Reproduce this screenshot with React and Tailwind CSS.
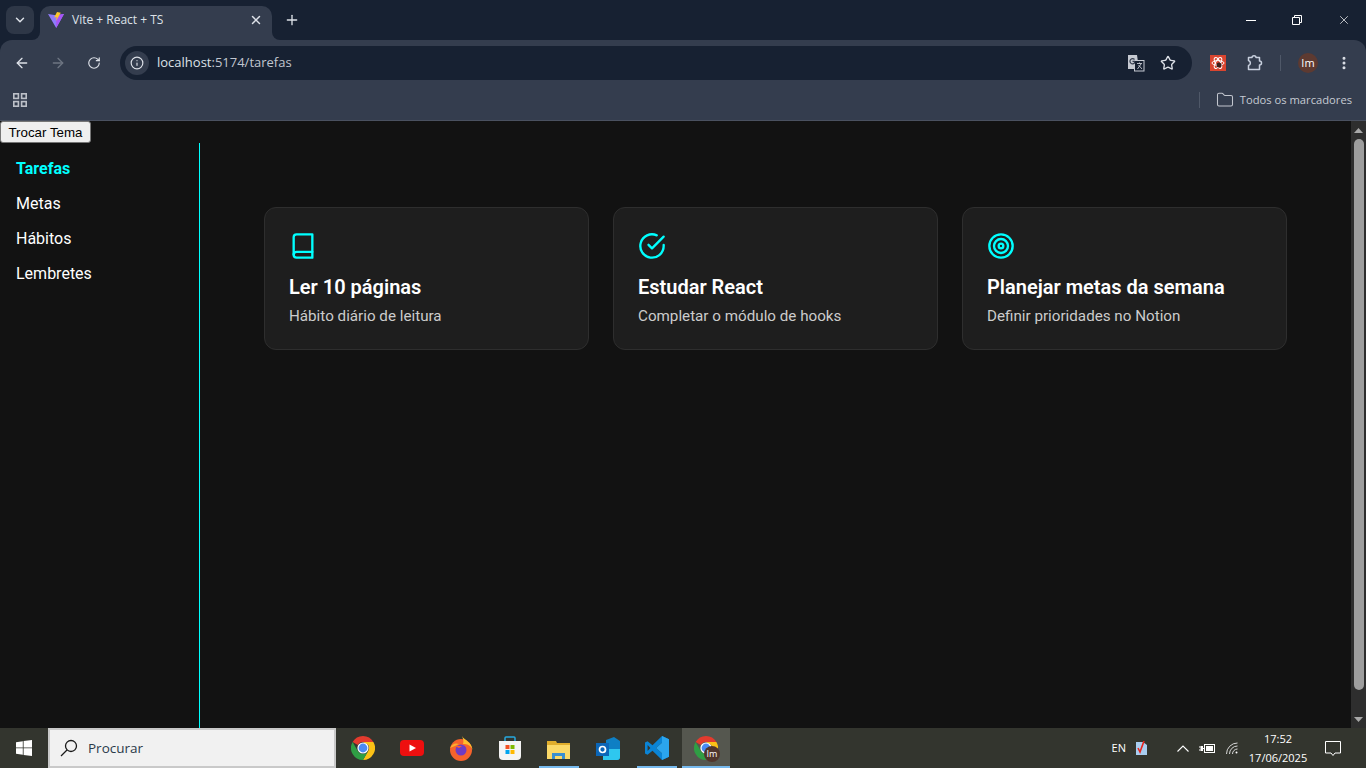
import { ArrowLeft, ArrowRight, ChevronDown, EllipsisVertical, Folder, Info, Plus, RotateCw, Star, X } from 'lucide-react'
import { FiBook, FiCheckCircle, FiTarget } from 'react-icons/fi'

const cards = [
  { icon: FiBook, title: 'Ler 10 páginas', text: 'Hábito diário de leitura' },
  { icon: FiCheckCircle, title: 'Estudar React', text: 'Completar o módulo de hooks' },
  { icon: FiTarget, title: 'Planejar metas da semana', text: 'Definir prioridades no Notion' },
]

function ViteLogo() {
  return (
    <svg width="16" height="16" viewBox="0 0 16 16">
      <path d="M0 2 L8 3.2 L16 2 L8.2 16 Z" fill="#8f7bfb" />
      <path d="M8 3 L16 2 L8.2 16 Z" fill="#a855f7" />
      <path d="M9 0 L12.8 0.8 L8 9 L8.6 5 L6.2 5.4 Z" fill="#fcc72b" />
    </svg>
  )
}

function ChromeLogo({ size = 24 }) {
  return (
    <svg width={size} height={size} viewBox="0 0 24 24">
      <path d="M12 0 A12 12 0 0 1 22.4 6 L12 6 A6 6 0 0 0 6.8 9 L1.6 6 A12 12 0 0 1 12 0 Z" fill="#e33b2e" />
      <path d="M22.4 6 A12 12 0 0 1 12 24 L17.2 15 A6 6 0 0 0 17.2 9 L12 6 Z" fill="#fbc116" />
      <path d="M1.6 6 A12 12 0 0 0 12 24 L17.2 15 A6 6 0 0 1 6.8 15 Z" fill="#2f9e44" />
      <circle cx="12" cy="12" r="5.6" fill="#fff" />
      <circle cx="12" cy="12" r="4.4" fill="#4a8af4" />
    </svg>
  )
}

function TaskbarIcons() {
  return (
    <div className="flex h-full items-center">
      <div className="flex h-full w-[48px] items-center justify-center"><ChromeLogo /></div>
      <div className="flex h-full w-[49px] items-center justify-center">
        <svg width="24" height="16" viewBox="0 0 24 16">
          <rect width="24" height="16" rx="4" fill="#ee0f0f" />
          <path d="M9.5 4.5 L16 8 L9.5 11.5 Z" fill="#fff" />
        </svg>
      </div>
      <div className="flex h-full w-[49px] items-center justify-center">
        <svg width="24" height="25" viewBox="0 0 24 25">
          <circle cx="12" cy="14" r="11" fill="#f7632c" />
          <path d="M13 0 C15 4 23 6 23.5 14 C22 9 18 8 14 8 C15 5 14 3 13 0 Z" fill="#fdbf2d" />
          <path d="M1 12 C3 8 6 6.5 10 8 L6 10 Z" fill="#fbae2c" />
          <circle cx="12" cy="14" r="5.5" fill="#6f3bc4" />
          <path d="M6 10 H13 L10 12 Z" fill="#f7632c" />
        </svg>
      </div>
      <div className="flex h-full w-[49px] items-center justify-center">
        <svg width="24" height="24" viewBox="0 0 24 24">
          <path d="M7 6 V2 Q7 1 8 1 H16 Q17 1 17 2 V6" fill="none" stroke="#27a9e0" strokeWidth="1.5" />
          <path d="M1 5 H23 V20 Q23 24 19 24 H5 Q1 24 1 20 Z" fill="#f4f4f4" />
          <rect x="7.5" y="9" width="4" height="4" fill="#f25022" />
          <rect x="12.5" y="9" width="4" height="4" fill="#7fba00" />
          <rect x="7.5" y="14" width="4" height="4" fill="#00a4ef" />
          <rect x="12.5" y="14" width="4" height="4" fill="#ffb900" />
        </svg>
      </div>
      <div className="flex h-full w-[49px] flex-col items-center justify-end">
        <svg className="mb-[7px]" width="23" height="18" viewBox="0 0 23 18">
          <path d="M0 0 H9 L10 2 H23 V18 H0 Z" fill="#e0ad2c" />
          <path d="M0 4 H23 V18 H0 Z" fill="#fbd968" />
          <path d="M5 18 V12 H18 V18 H15 V15 H8 V18 Z" fill="#3a8fd0" />
        </svg>
        <div className="h-[2px] w-[40px] bg-[#76b9ed]" />
      </div>
      <div className="flex h-full w-[49px] items-center justify-center">
        <svg width="24" height="23" viewBox="0 0 24 23">
          <path d="M10 3 L18 0 L24 4 V20 Q24 23 21 23 H7 V18 H10 Z" fill="#0e7fc4" />
          <path d="M7 12 H24 V20 Q24 23 21 23 H7 Z" fill="#2ec7ef" />
          <rect x="0" y="6" width="13" height="13" fill="#0b66b8" />
          <circle cx="6.5" cy="12.5" r="3" fill="none" stroke="#fff" strokeWidth="1.7" />
        </svg>
      </div>
      <div className="flex h-full w-[50px] flex-col items-center justify-end">
        <svg className="mb-[6px]" width="24" height="24" viewBox="0 0 24 24">
          <path d="M17 0 L24 3.2 V20.8 L17 24 L7.5 14.8 L2.5 18.7 L0 17.4 V6.6 L2.5 5.3 L7.5 9.2 Z M17 6.8 L11 12 L17 17.2 Z M2.6 9 V15 L5.4 12 Z" fill="#0a84d6" />
          <path d="M17 0 L24 3.2 V20.8 L17 24 Z M17 6.8 V17.2 L11 12 Z" fill="#2ba5ee" fillRule="evenodd" />
        </svg>
        <div className="h-[2px] w-[40px] bg-[#76b9ed]" />
      </div>
      <div className="flex h-full w-[48px] flex-col items-center justify-end bg-[#55574f]">
        <div className="relative mb-[6px]">
          <ChromeLogo />
          <div className="absolute left-[10px] top-[10px] flex h-[16px] w-[16px] items-center justify-center rounded-full bg-[#50352c] text-[9px] text-white">Im</div>
        </div>
        <div className="h-[2px] w-full bg-[#76b9ed]" />
      </div>
    </div>
  )
}

export default function App() {
  return (
    <div className="flex h-screen w-full flex-col overflow-hidden bg-[#121212] font-['Roboto',sans-serif]">
      {/* Browser chrome */}
      <div className="h-[121px] shrink-0 bg-[#172132] font-['Open_Sans',sans-serif] text-[#dde1e8]">
        <div className="flex h-[40px] items-end">
          <div className="mb-[6px] ml-[6px] flex h-[28px] w-[28px] items-center justify-center rounded-lg bg-[#2e3747]">
            <ChevronDown size={14} strokeWidth={2.5} />
          </div>
          <div className="relative ml-[6px] flex h-[34px] w-[232px] items-center rounded-t-[10px] bg-[#343d4e] pb-[6px] pl-[8px] pr-[9px]">
            <div className="absolute -left-[8px] bottom-0 h-[8px] w-[8px] bg-[#343d4e]"><div className="h-full w-full rounded-br-[8px] bg-[#172132]" /></div>
            <ViteLogo />
            <span className="ml-[8px] flex-1 text-[12px]">Vite + React + TS</span>
            <X size={14} strokeWidth={2.5} />
            <div className="absolute -right-[8px] bottom-0 h-[8px] w-[8px] bg-[#343d4e]"><div className="h-full w-full rounded-bl-[8px] bg-[#172132]" /></div>
          </div>
          <Plus className="mb-[12px] ml-[12px]" size={16} strokeWidth={2} />
          <div className="mb-[13px] ml-auto flex items-center text-white">
            <div className="flex w-[46px] justify-center"><div className="h-px w-[10px] bg-white" /></div>
            <div className="flex w-[46px] justify-center">
              <svg width="10" height="10" viewBox="0 0 10 10" fill="none" stroke="#fff">
                <path d="M.5 2.5 H7.5 V9.5 H.5 Z M2.5 2.5 V.5 H9.5 V7.5 H7.5" />
              </svg>
            </div>
            <div className="flex w-[46px] justify-center pl-[1px]"><X size={14} strokeWidth={1.2} /></div>
          </div>
        </div>

        <div className="relative h-[81px] rounded-t-[12px] border-b border-[#4a5160] bg-[#343d4e]">
          <div className="flex h-[46px] items-center pl-[14px]">
            <ArrowLeft size={16} strokeWidth={2} />
            <ArrowRight className="ml-[20px] text-[#6d7582]" size={16} strokeWidth={2} />
            <RotateCw className="ml-[21px]" size={14} strokeWidth={2} />
            <div className="ml-[19px] flex h-[34px] w-[1072px] items-center rounded-full bg-[#172132] pl-[5px] pr-[16px]">
              <div className="flex h-[24px] w-[24px] items-center justify-center rounded-full bg-[#343d4e]">
                <Info size={14} strokeWidth={2} />
              </div>
              <span className="ml-[8px] flex-1 text-[13px]">localhost<span className="text-[#c1c6cf]">:5174/tarefas</span></span>
              <svg width="18" height="18" viewBox="0 0 18 18">
                <path d="M1 1 H10 L12 15 H1 Z" fill="#c6cad2" />
                <rect x="7.5" y="6.5" width="9.5" height="10.5" fill="#172132" stroke="#c6cad2" />
                <path d="M10 9.5 H15 M12.5 8.5 V10 M10.5 15 L14 10 M11.5 11 L15 15" fill="none" stroke="#c6cad2" strokeWidth="0.9" />
                <path d="M7.5 5.5 A2.6 2.6 0 1 0 7.5 9 V7.3 H5.5" fill="none" stroke="#343d4e" strokeWidth="1.2" />
              </svg>
              <Star className="ml-[15px]" size={16} strokeWidth={2} />
            </div>
            <div className="ml-[18px] flex h-[16px] w-[16px] items-center justify-center bg-[#d9452f]">
              <svg width="14" height="14" viewBox="0 0 14 14" fill="none" stroke="#fff" strokeWidth="1">
                <ellipse cx="7" cy="7" rx="6" ry="2.4" />
                <ellipse cx="7" cy="7" rx="6" ry="2.4" transform="rotate(60 7 7)" />
                <ellipse cx="7" cy="7" rx="6" ry="2.4" transform="rotate(120 7 7)" />
                <circle cx="8" cy="9" r="2.5" fill="#3a1e1a" stroke="none" />
              </svg>
            </div>
            <svg className="ml-[20px]" width="18" height="18" viewBox="0 0 18 18" fill="none" stroke="#c8d0de" strokeWidth="1.5" strokeLinejoin="round">
              <path d="M2.5 3.5 H6 A2 1.8 0 0 1 10 3.5 H13.5 V7 A1.9 1.9 0 0 1 13.5 11 V15.5 H2.5 V11.5 A2.6 2.6 0 0 0 2.5 6.5 Z" />
            </svg>
            <div className="ml-[16px] h-[16px] w-px bg-[#4f5868]" />
            <div className="ml-[17px] flex h-[20px] w-[20px] items-center justify-center rounded-full bg-[#5d3a31] text-[11px] text-white">Im</div>
            <EllipsisVertical className="ml-[18px]" size={16} strokeWidth={2.5} />
          </div>
          <div className="flex h-[28px] items-center pl-[13px] pr-[14px]">
            <svg width="14" height="14" viewBox="0 0 14 14" fill="none" stroke="#bcc0c8" strokeWidth="1.6">
              <rect x="0.8" y="0.8" width="4.6" height="4.6" />
              <rect x="8.6" y="0.8" width="4.6" height="4.6" />
              <rect x="0.8" y="8.6" width="4.6" height="4.6" />
              <rect x="8.6" y="8.6" width="4.6" height="4.6" />
            </svg>
            <div className="ml-auto h-[16px] w-px bg-[#4f5868]" />
            <Folder className="ml-[16px] text-[#c2c6ce]" size={18} strokeWidth={1.4} />
            <span className="ml-[6px] text-[11.2px] text-[#c6cbd3]">Todos os marcadores</span>
          </div>
        </div>
      </div>

      {/* Page */}
      <div className="flex min-h-0 flex-1">
        <div className="flex min-w-0 flex-1 flex-col">
          <button className="h-[22px] w-[91px] shrink-0 rounded-[3px] border border-[#767676] bg-[#efefef] pt-[1px] font-['Liberation_Sans',sans-serif] text-[13.33px] text-black">
            Trocar Tema
          </button>
          <div className="flex min-h-0 flex-1">
            <nav className="flex w-[200px] shrink-0 flex-col gap-[11px] border-r border-[#00ffff] pl-[16px] pt-[14px] text-[16px] leading-[24px] text-white">
              <a className="font-bold text-[#00ffff]">Tarefas</a>
              <a>Metas</a>
              <a>Hábitos</a>
              <a>Lembretes</a>
            </nav>
            <main className="grid flex-1 grid-cols-3 content-start gap-[24px] p-[64px]">
              {cards.map(({ icon: Icon, title, text }) => (
                <div key={title} className="h-[143px] rounded-[12px] border border-[#2e2e2e] bg-[#1e1e1e] p-[24px]">
                  <Icon size={28} className="text-[#00ffff]" />
                  <h3 className="mt-[13px] text-[20px] font-semibold leading-[28px] text-white">{title}</h3>
                  <p className="mt-[4px] text-[15.2px] leading-[22px] text-[#cccccc]">{text}</p>
                </div>
              ))}
            </main>
          </div>
        </div>

        {/* Scrollbar */}
        <div className="flex w-[15px] shrink-0 flex-col items-center bg-[#2e2e2e]">
          <div className="flex h-[18px] w-full items-center justify-center">
            <svg width="9" height="5" viewBox="0 0 9 5" fill="#a8a8a8"><path d="M4.5 0 L9 5 H0 Z" /></svg>
          </div>
          <div className="ml-[1px] h-[551px] w-[10px] rounded-full bg-[#9e9e9e]" />
          <div className="mt-auto flex h-[18px] w-full items-center justify-center">
            <svg width="9" height="5" viewBox="0 0 9 5" fill="#a8a8a8"><path d="M0 0 H9 L4.5 5 Z" /></svg>
          </div>
        </div>
      </div>

      {/* Windows taskbar */}
      <div className="flex h-[40px] shrink-0 items-center bg-[#33352e] font-['Open_Sans',sans-serif] text-white">
        <div className="flex h-full w-[48px] items-center justify-center">
          <svg width="16" height="16" viewBox="0 0 16 16" fill="#fff">
            <path d="M0 2.2 L6.8 1.2 V7.5 H0 Z M7.6 1.1 L16 0 V7.5 H7.6 Z M0 8.3 H6.8 V14.7 L0 13.8 Z M7.6 8.3 H16 V16 L7.6 14.9 Z" />
          </svg>
        </div>
        <div className="flex h-full w-[288px] items-center border-2 border-[#c9c9c9] bg-[#f1f1f1] pl-[10px] text-[#2b3a4a]">
          <svg width="18" height="18" viewBox="0 0 18 18" fill="none" stroke="#1a1a1a" strokeWidth="1.3">
            <circle cx="11" cy="7" r="5.5" />
            <path d="M7 11 L1 17" />
          </svg>
          <span className="ml-[10px] text-[13.5px]">Procurar</span>
        </div>
        <div className="ml-[3px] h-full"><TaskbarIcons /></div>

        <div className="ml-auto flex h-full items-center pr-[25px]">
          <span className="text-[11px]">EN</span>
          <svg className="ml-[10px]" width="11" height="14" viewBox="0 0 11 14">
            <path d="M0 1 H7 L11 4 V14 H0 Z" fill="#a9cdf0" />
            <path d="M2 7 L4 11 L8 0" fill="none" stroke="#e8241c" strokeWidth="1.6" />
          </svg>
          <svg className="ml-[30px]" width="12" height="7" viewBox="0 0 12 7" fill="none" stroke="#fff" strokeWidth="1.1">
            <path d="M.5 6.5 L6 1 L11.5 6.5" />
          </svg>
          <svg className="ml-[10px]" width="16" height="11" viewBox="0 0 16 11" fill="none" stroke="#fff">
            <rect x="5.5" y="1.5" width="10" height="8" />
            <rect x="7" y="3" width="7" height="5" fill="#fff" stroke="none" />
            <rect x="1.5" y="3" width="2.5" height="5" fill="#fff" stroke="none" />
            <path d="M0 4 H1.5 M0 7 H1.5 M4 5.5 H5.5" />
          </svg>
          <svg className="ml-[11px]" width="12" height="12" viewBox="0 0 12 12" fill="none" stroke="#d8d8d8" strokeWidth="1">
            <path d="M.5 12 A11 11 0 0 1 11.5 1 M3.5 12 A8 8 0 0 1 11.5 4 M6.5 12 A5 5 0 0 1 11.5 7" />
            <circle cx="10.5" cy="10.5" r="1" fill="#fff" stroke="none" />
          </svg>
          <div className="ml-[7px] flex w-[66px] flex-col items-center text-[11px] leading-[19px]">
            <span>17:52</span>
            <span>17/06/2025</span>
          </div>
          <svg className="ml-[14px]" width="16" height="15" viewBox="0 0 16 15" fill="none" stroke="#fff">
            <path d="M.5 .5 H15.5 V12 H10 L8 14.5 L6 12 H.5 Z" />
          </svg>
        </div>
      </div>
    </div>
  )
}
